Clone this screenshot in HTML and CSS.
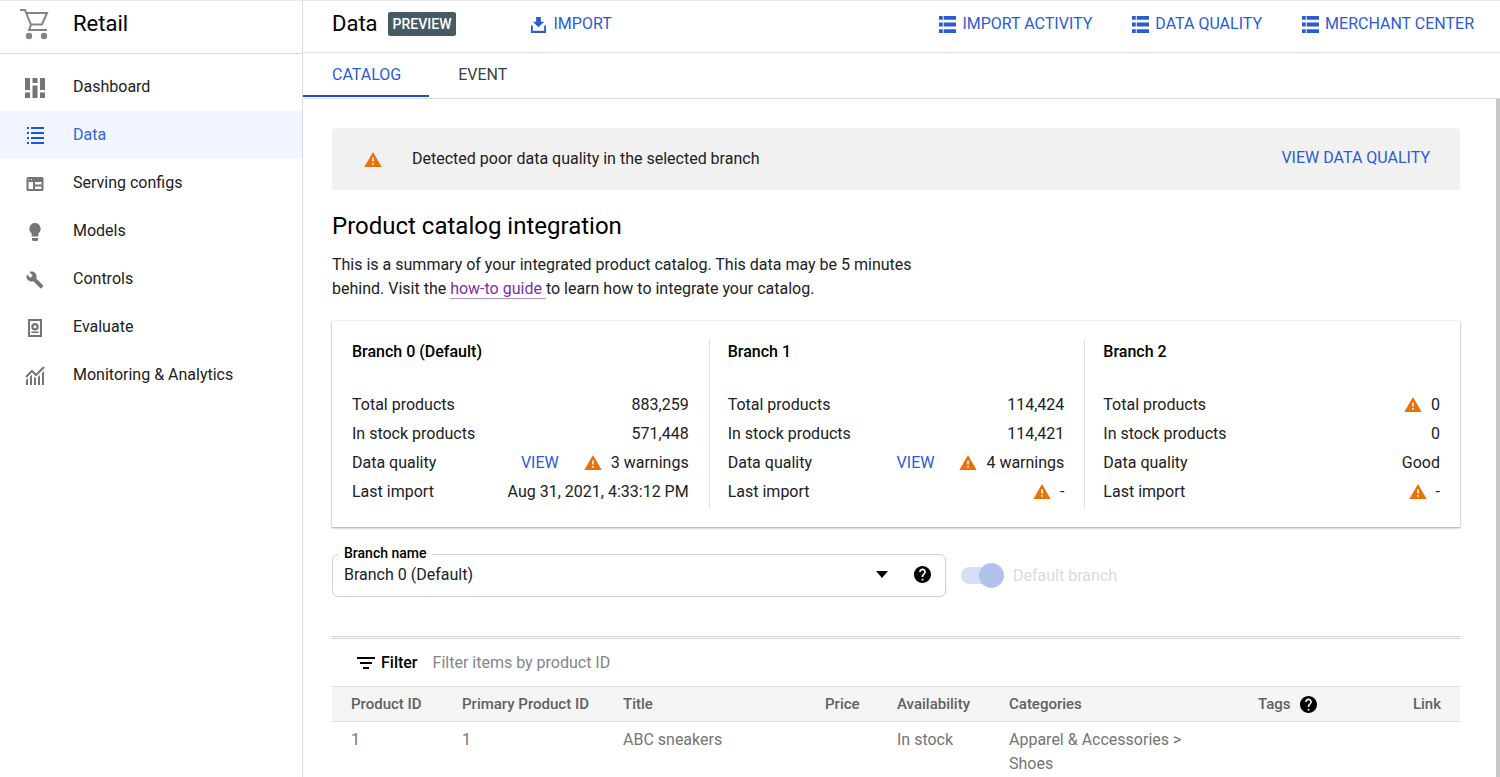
FILE: index.html
```html
<!DOCTYPE html>
<html lang="en">
<head>
<meta charset="utf-8">
<title>Retail – Data</title>
<link rel="stylesheet" href="styles.css">
</head>
<body>
<svg class="sprite" aria-hidden="true">
  <symbol id="warning" viewBox="0 0 22 19"><path fill="#e8710a" d="M0 19h22L11 0z"/><path fill="#fff" d="M10 7h2v5h-2zM10 14h2v2h-2z"/></symbol>
  <symbol id="list" viewBox="0 0 18 18"><path d="M0 0h4v4H0zM5 0h13v4H5zM0 7h4v4H0zM5 7h13v4H5zM0 14h4v4H0zM5 14h13v4H5z"/></symbol>
  <symbol id="help" viewBox="2 2 20 20"><path d="M12 2C6.48 2 2 6.48 2 12s4.48 10 10 10 10-4.48 10-10S17.52 2 12 2zm1 17h-2v-2h2v2zm2.07-7.75-.9.92C13.45 12.9 13 13.5 13 15h-2v-.5c0-1.1.45-2.1 1.17-2.83l1.24-1.26c.37-.36.59-.86.59-1.41 0-1.1-.9-2-2-2s-2 .9-2 2H8c0-2.21 1.79-4 4-4s4 1.79 4 4c0 .88-.36 1.68-.93 2.25z"/></symbol>
</svg>
<div class="app">
  <aside class="sidebar">
    <div class="brand">
      <svg class="cart" viewBox="0 0 30 31" aria-hidden="true"><path fill="none" stroke="#80868b" stroke-width="2" d="M0 1h5l6 15L9 21h18M6 4h21l-5 11.500H11"/><circle cx="9" cy="27" r="3.200"/><circle cx="24" cy="27" r="3.200"/></svg>
      <span class="brand-name">Retail</span>
    </div>
    <nav class="nav">
      <a class="nav-item" href="#"><svg viewBox="0 0 20 20" aria-hidden="true"><path d="M0 0h5v12H0zM0 14.500h5V20H0zM7.500 0h5v5h-5zM7.500 7.500h5V20h-5zM15 0h5v12h-5zM15 14.500h5V20h-5z"/></svg>Dashboard</a>
      <a class="nav-item active" href="#" aria-current="page"><svg viewBox="0 0 20 20" aria-hidden="true"><path d="M2 1h2v2H2zM6 1h13v2H6zM2 6h2v2H2zM6 6h13v2H6zM2 11h2v2H2zM6 11h13v2H6zM2 16h2v2H2zM6 16h13v2H6z"/></svg>Data</a>
      <a class="nav-item" href="#"><svg viewBox="0 0 20 20" aria-hidden="true"><path fill-rule="evenodd" d="M3 3h14a1.500 1.500 0 0 1 1.500 1.500v11A1.500 1.500 0 0 1 17 17H3a1.500 1.500 0 0 1-1.500-1.500v-11A1.500 1.500 0 0 1 3 3zM3.500 8v7H8V8zM10 8v2.500h6.500V8zM10 12.500V15h6.500v-2.500zM3.500 5v1h1V5zM6 5v1h1V5z"/></svg>Serving configs</a>
      <a class="nav-item" href="#"><svg viewBox="0 0 20 20" aria-hidden="true"><path d="M10 1a5.700 5.700 0 0 0-3.400 10.200V13.500a1 1 0 0 0 1 1h4.800a1 1 0 0 0 1-1v-2.300A5.700 5.700 0 0 0 10 1zM7 16h6v1.500a1.500 1.500 0 0 1-1.500 1.500h-3A1.500 1.500 0 0 1 7 17.500z"/></svg>Models</a>
      <a class="nav-item" href="#"><svg viewBox="-1 -1 26 26" aria-hidden="true"><path d="m22.700 19-9.100-9.100c.9-2.300.4-5-1.500-6.900-2-2-5-2.400-7.400-1.300L9 6 6 9 1.600 4.700C.4 7.100.9 10.100 2.900 12.100c1.900 1.900 4.600 2.400 6.900 1.500l9.100 9.100c.4.4 1 .4 1.400 0l2.300-2.300c.5-.4.5-1.100.1-1.400z"/></svg>Controls</a>
      <a class="nav-item" href="#"><svg viewBox="0 0 20 20" aria-hidden="true"><path fill-rule="evenodd" d="M3 1h14v18H3zM5 3v14h10V3z"/><path fill-rule="evenodd" d="M10 5a3.700 3.700 0 1 1 0 7.400A3.700 3.700 0 0 1 10 5zm0 2.200a1.500 1.500 0 1 0 0 3 1.500 1.500 0 0 0 0-3zM6.500 13.500h7V15h-7z"/></svg>Evaluate</a>
      <a class="nav-item" href="#"><svg viewBox="0 0 20 20" aria-hidden="true"><path fill="none" stroke="#757575" stroke-width="2" d="m1 11 6-6 4 4 8-8"/><path d="M1 14l2-2v7H1zM5 10.500 7 8.500V19H5zM9 10.500l2 2V19H9zM13 11l2-2v10h-2zM17 7l2-2v14h-2z"/></svg>Monitoring &amp; Analytics</a>
    </nav>
  </aside>
  <main class="main">
    <header class="topbar">
      <h1 class="page-title">Data</h1>
      <span class="badge">PREVIEW</span>
      <button class="action import"><svg viewBox="0 0 16 18" aria-hidden="true"><path d="M5.500 1h5v5H14l-6 6-6-6h3.500zM0 10h2v5.500h12V10h2v8H0z"/></svg>IMPORT</button>
      <div class="actions">
        <button class="action"><svg aria-hidden="true"><use href="#list"/></svg>IMPORT ACTIVITY</button>
        <button class="action"><svg aria-hidden="true"><use href="#list"/></svg>DATA QUALITY</button>
        <button class="action"><svg aria-hidden="true"><use href="#list"/></svg>MERCHANT CENTER</button>
      </div>
    </header>
    <div class="tabs" role="tablist">
      <button class="tab selected" role="tab" aria-selected="true">CATALOG</button>
      <button class="tab" role="tab" aria-selected="false">EVENT</button>
    </div>
    <div class="content">
      <div class="banner">
        <svg class="warn" aria-hidden="true"><use href="#warning"/></svg>
        <span class="banner-text">Detected poor data quality in the selected branch</span>
        <button class="action">VIEW DATA QUALITY</button>
      </div>
      <h2 class="section-title">Product catalog integration</h2>
      <p class="intro">This is a summary of your integrated product catalog. This data may be 5 minutes<br>behind. Visit the <a href="#">how-to guide </a>to learn how to integrate your catalog.</p>
      <div class="branches">
        <section class="branch">
          <h3>Branch 0 (Default)</h3>
          <dl>
            <div><dt>Total products</dt><dd>883,259</dd></div>
            <div><dt>In stock products</dt><dd>571,448</dd></div>
            <div><dt>Data quality</dt><dd><button class="view">VIEW</button><svg class="warn" aria-hidden="true"><use href="#warning"/></svg>3 warnings</dd></div>
            <div><dt>Last import</dt><dd>Aug 31, 2021, 4:33:12 PM</dd></div>
          </dl>
        </section>
        <section class="branch">
          <h3>Branch 1</h3>
          <dl>
            <div><dt>Total products</dt><dd>114,424</dd></div>
            <div><dt>In stock products</dt><dd>114,421</dd></div>
            <div><dt>Data quality</dt><dd><button class="view">VIEW</button><svg class="warn" aria-hidden="true"><use href="#warning"/></svg>4 warnings</dd></div>
            <div><dt>Last import</dt><dd><svg class="warn" aria-hidden="true"><use href="#warning"/></svg>-</dd></div>
          </dl>
        </section>
        <section class="branch">
          <h3>Branch 2</h3>
          <dl>
            <div><dt>Total products</dt><dd><svg class="warn" aria-hidden="true"><use href="#warning"/></svg>0</dd></div>
            <div><dt>In stock products</dt><dd>0</dd></div>
            <div><dt>Data quality</dt><dd>Good</dd></div>
            <div><dt>Last import</dt><dd><svg class="warn" aria-hidden="true"><use href="#warning"/></svg>-</dd></div>
          </dl>
        </section>
      </div>
      <div class="controls">
        <div class="field">
          <label for="branch">Branch name</label>
          <select id="branch"><option>Branch 0 (Default)</option><option>Branch 1</option><option>Branch 2</option></select>
          <svg class="caret" viewBox="0 0 12 7" aria-hidden="true"><path d="M0 0h12L6 7z"/></svg>
          <svg class="help field-help" aria-hidden="true"><use href="#help"/></svg>
        </div>
        <label class="toggle"><input type="checkbox" checked disabled>Default branch</label>
      </div>
      <div class="products">
        <div class="filter">
          <svg class="filter-icon" viewBox="0 0 18 12" aria-hidden="true"><path d="M0 0h18v2H0zM3 5h12v2H3zM6 10h6v2H6z"/></svg>
          <label for="filter">Filter</label>
          <input id="filter" type="text" placeholder="Filter items by product ID">
        </div>
        <table>
          <colgroup><col class="c-id"><col class="c-primary"><col><col class="c-price"><col class="c-avail"><col class="c-cat"><col class="c-tags"><col class="c-link"></colgroup>
          <thead><tr><th>Product ID</th><th>Primary Product ID</th><th>Title</th><th>Price</th><th>Availability</th><th>Categories</th><th><span class="with-help">Tags <svg class="help" aria-hidden="true"><use href="#help"/></svg></span></th><th class="end">Link</th></tr></thead>
          <tbody><tr><td>1</td><td>1</td><td>ABC sneakers</td><td></td><td>In stock</td><td class="category">Apparel &amp; Accessories &gt; Shoes</td><td></td><td></td></tr></tbody>
        </table>
      </div>
    </div>
  </main>
</div>
</body>
</html>
```
FILE: styles.css
```css
* { box-sizing: border-box; }

body {
  margin: 0;
  background: #fff;
  color: #202124;
  font: 16px/24px Roboto, "Liberation Sans", sans-serif;
}

button, select, input { font: inherit; }
button { border: 0; padding: 0; background: none; cursor: pointer; }
h1, h2, h3, p, dl, dd { margin: 0; }
svg { flex: none; }

.sprite { position: absolute; width: 0; height: 0; }

.app {
  display: flex;
  height: 100vh;
  overflow: hidden;
  border-top: 1px solid #ebebeb;
}

.sidebar {
  flex: none;
  width: 303px;
  border-right: 1px solid #dadce0;
}

.brand {
  display: flex;
  align-items: center;
  gap: 23px;
  height: 53px;
  padding: 0 20px 6px;
  border-bottom: 1px solid #dadce0;
}

.cart { width: 30px; height: 31px; fill: #80868b; }
.brand-name { font-size: 22px; color: #000; }

.nav { padding-top: 9px; }

.nav-item {
  display: flex;
  align-items: center;
  gap: 28px;
  height: 48px;
  padding-left: 25px;
  color: #202124;
  text-decoration: none;
}

.nav-item svg { width: 20px; height: 20px; margin-top: 2px; fill: #757575; }
.nav-item.active { background: #f0f5ff; color: #3367d6; }
.nav-item.active svg { fill: #1a56db; }

.main {
  display: flex;
  flex-direction: column;
  flex: 1;
  min-width: 0;
}

.topbar {
  display: flex;
  flex: none;
  align-items: center;
  height: 52px;
  padding: 0 26px 5px 29px;
  border-bottom: 1px solid #e0e0e0;
}

.page-title { font-size: 22px; font-weight: 400; color: #000; }

.badge {
  margin-left: 10px;
  padding: 0 5px;
  border-radius: 2px;
  background: #455a64;
  color: #fff;
  font-size: 14px;
  font-weight: 500;
}

.action {
  display: flex;
  align-items: center;
  gap: 6px;
  color: #2a5bd7;
  white-space: nowrap;
}

.action svg { width: 17px; height: 17px; fill: #2a5bd7; }
.import { margin-left: 74px; }
.actions { display: flex; gap: 40px; margin-left: auto; }

.tabs {
  display: flex;
  flex: none;
  height: 46px;
  padding-bottom: 1px;
  border-bottom: 1px solid #dadce0;
}

.tab {
  padding: 2px 28px 0 29px;
  border-bottom: 2px solid transparent;
  color: #3c4043;
}

.tab.selected { border-color: #1a4fd0; color: #2a5bd7; }

.content {
  flex: 1;
  min-height: 0;
  overflow: hidden;
  padding: 29px 36px 0 29px;
  border-right: 4px solid #c8c8c8;
}

.banner {
  display: flex;
  align-items: center;
  height: 62px;
  padding: 0 30px 0 32px;
  border-radius: 4px;
  background: #f1f1f1;
}

.banner .action { padding-bottom: 3px; }
.warn { width: 18px; height: 15px; }
.banner-text { flex: 1; margin-left: 30px; }

.section-title {
  margin-top: 20px;
  color: #000;
  font-size: 24px;
  font-weight: 400;
  line-height: 32px;
}

.intro { margin-top: 11px; }

.intro a {
  border-bottom: 1px solid #b794cc;
  color: #7b2fa8;
  text-decoration: none;
}

.branches {
  display: flex;
  margin-top: 20px;
  padding: 18px 0 19px;
  box-shadow: 0 1px 2px rgba(0, 0, 0, .35), 0 0 1px rgba(0, 0, 0, .2);
}

.branch { flex: 1; padding: 1px 20px 2px; }
.branch + .branch { border-left: 1px solid #e0e0e0; padding-left: 18px; }
.branch h3 { color: #000; font-size: 16px; font-weight: 500; }
.branch dl { margin-top: 26px; }

.branch dl div {
  display: flex;
  justify-content: space-between;
  line-height: 29px;
}

.branch dd { display: flex; align-items: center; }
.branch .warn { margin-right: 9px; }
.view { margin-right: 25px; color: #2a5bd7; }

.controls {
  display: flex;
  align-items: center;
  gap: 15px;
  margin-top: 27px;
}

.field { position: relative; width: 614px; }

.field label {
  position: absolute;
  top: -11px;
  left: 6px;
  padding: 0 6px;
  background: #fff;
  color: #000;
  font-size: 14px;
  font-weight: 500;
  line-height: 20px;
}

.field select {
  display: block;
  width: 100%;
  height: 43px;
  padding: 0 110px 1px 11px;
  border: 1px solid #d0d0d0;
  border-radius: 6px;
  background: #fff;
  color: #202124;
  appearance: none;
}

.caret {
  position: absolute;
  top: 17px;
  right: 58px;
  width: 12px;
  height: 7px;
  pointer-events: none;
}

.help { width: 17px; height: 17px; fill: #000; }
.field-help { position: absolute; top: 12px; right: 15px; }

.toggle {
  display: flex;
  align-items: center;
  gap: 9px;
  color: #dadada;
}

.toggle input {
  position: relative;
  width: 43px;
  height: 17px;
  margin: 0;
  border-radius: 9px;
  background: #d5dff6;
  appearance: none;
}

.toggle input::after {
  content: "";
  position: absolute;
  top: -4px;
  right: 0;
  width: 25px;
  height: 25px;
  border-radius: 50%;
  background: #b1c3ed;
}

.products {
  margin-top: 39px;
  border-top: 3px double #d4d4d4;
}

.filter {
  display: flex;
  align-items: center;
  height: 47px;
  padding-left: 25px;
}

.filter-icon { width: 18px; height: 12px; }
.filter label { margin-left: 6px; color: #000; font-weight: 500; }

.filter input {
  flex: 1;
  margin-left: 15px;
  padding: 0;
  border: 0;
  outline: 0;
}

.filter input::placeholder { color: #80868b; }

table {
  width: 100%;
  border-collapse: collapse;
  table-layout: fixed;
}

.c-id { width: 111px; }
.c-primary { width: 161px; }
.c-price { width: 72px; }
.c-avail { width: 112px; }
.c-cat { width: 249px; }
.c-tags { width: 136px; }
.c-link { width: 85px; }

th, td {
  padding: 5px 0 5px 19px;
  text-align: left;
  vertical-align: top;
}

th {
  border: solid #e0e0e0;
  border-width: 1px 0;
  background: #f5f5f5;
  color: #616161;
  font-size: 15px;
  font-weight: 500;
  white-space: nowrap;
}

td { padding-top: 6px; color: #757575; }
.end { padding-right: 19px; text-align: right; }
.category { padding-right: 40px; }
.with-help { display: flex; align-items: center; gap: 10px; }
```
